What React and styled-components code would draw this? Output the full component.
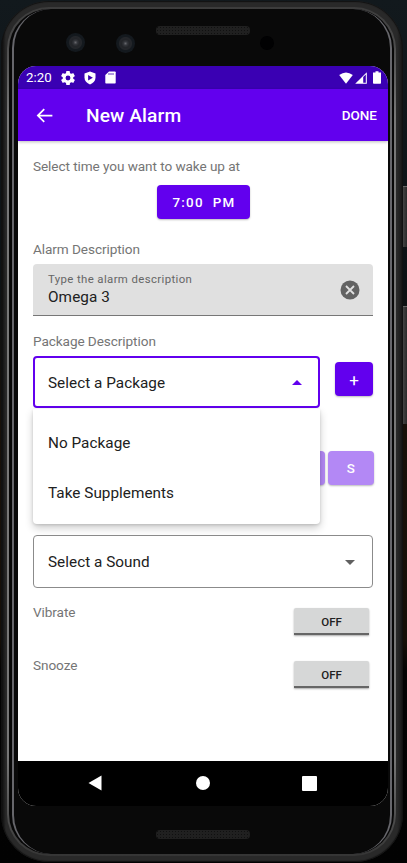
import React from "react";
import styled, { createGlobalStyle } from "styled-components";

const Global = createGlobalStyle`
  *{box-sizing:border-box}
  html,body{margin:0;padding:0;background:#05070a}
  body{width:407px;height:863px;overflow:hidden;font-family:Roboto,"Liberation Sans",sans-serif}
  button{font-family:inherit;border:0;padding:0;margin:0}
`;

const Backdrop = styled.main`
  position:relative;width:407px;height:863px;padding:1px 4px 1px 1px;overflow:hidden;
  background:linear-gradient(180deg,#12191d 0,#0c1114 280px,#171009 430px,#150f08 640px,#030303 670px,#020202 100%);
`;
const SideKey = styled.div`
  position:absolute;right:0;top:${p => p.$top}px;width:4px;height:${p => p.$height}px;
  background:linear-gradient(90deg,#444,#292929);border-top:1px solid #666;
`;
const Shell = styled.div`
  position:relative;height:861px;width:402px;border-radius:48px;padding:6px 7px 6px 6px;
  background:linear-gradient(90deg,#080808,#292929 5px,#292929 396px,#151515);
  box-shadow:inset 0 0 1px 1px #111;
`;
const Rim = styled.div`
  height:100%;border-radius:42px;padding:2px;
  background:linear-gradient(180deg,#3c3c3c 0,#484848 30px,#777 110px,#777 750px,#484848 820px,#353535 100%);
`;
const Channel = styled.div`
  height:100%;border-radius:40px;background:#070707;padding:0 2px 0 3px;
`;
const InnerRim = styled.div`
  height:100%;border-radius:39px;border:solid;border-width:0 2px;border-color:#66666b;
  background:#090909;padding:0 2px 0 4px;display:flex;flex-direction:column;
`;
const Forehead = styled.div`
  height:57px;flex:none;display:flex;justify-content:center;position:relative;
`;
const Grille = styled.div`
  width:94px;height:9px;margin-top:${p => p.$top}px;border-radius:4px;
  background-color:#202020;background-image:radial-gradient(#101010 .7px,transparent .9px);background-size:3px 3px;
`;
const Lens = styled.div`
  position:absolute;left:${p => p.$left}px;top:${p => p.$top}px;
  width:${p => p.$size}px;height:${p => p.$size}px;border-radius:50%;
  background:${p => p.$plain ? "#010102" : "radial-gradient(circle,#65666b 0,#33353a 2px,#222428 4px,#24262a 6px,#14191e 7px,#12181d 100%)"};
`;
const Screen = styled.section`
  width:370px;height:740px;flex:none;background:#fff;border-radius:18px;overflow:hidden;
  display:flex;flex-direction:column;
`;
const StatusBar = styled.header`
  height:23px;flex:none;background:#3a00b3;color:#fff;display:flex;align-items:center;
  padding:0 7px 0 8px;font-size:13.3px;
  svg{flex:none}
`;
const Clock = styled.span`width:35px;line-height:23px;`;
const StatusIcons = styled.div`display:flex;align-items:center;gap:9px;`;
const SystemIcons = styled.div`display:flex;align-items:center;gap:2px;margin-left:auto;`;
const BatterySlot = styled.span`display:flex;margin-left:4px;`;
const AppBar = styled.header`
  height:52px;flex:none;background:#6200ee;color:#fff;display:flex;align-items:center;
  padding:0 11px 0 16px;box-shadow:0 1px 3px #0004;z-index:1;
`;
const Title = styled.h1`margin:0 0 0 31px;padding-top:2px;font-size:19.2px;font-weight:500;line-height:24px;letter-spacing:.1px;`;
const Done = styled.button`margin-left:auto;background:none;color:#fff;font-size:13.5px;font-weight:500;letter-spacing:0;`;
const Form = styled.div`height:620px;padding:16px 15px 0;display:flex;flex-direction:column;`;
const Label = styled.label`
  display:block;height:18px;line-height:18px;color:#757575;font-size:13.6px;letter-spacing:-.08px;
`;
const AlarmLabel = styled(Label)`margin-top:21px;`;
const PackageLabel = styled(Label)`margin-top:16px;`;
const Filled = styled.button`
  height:34px;width:${p => p.$width}px;border-radius:4px;color:#fff;background:${p => p.$faded ? "#b388f5" : "#6200ee"};
  font-size:13.4px;font-weight:500;letter-spacing:1.2px;white-space:pre;padding:1px 0 0 1px;
  box-shadow:0 1px 2px #0004;display:flex;align-items:center;justify-content:center;flex:none;
`;
const TimeButton = styled(Filled)`margin:10px 0 0 124px;`;
const TextField = styled.div`
  height:52px;margin-top:6px;background:#e0e0e0;border-radius:4px 4px 0 0;border-bottom:1px solid #777;
  padding:9px 13px 0 15px;display:flex;justify-content:space-between;
`;
const Hint = styled.div`font-size:11.4px;line-height:13px;letter-spacing:.38px;color:#666;`;
const Value = styled.div`font-size:15.3px;line-height:20px;letter-spacing:.1px;color:#212121;margin-top:1px;`;
const ClearIcon = styled.svg`width:20px;height:20px;margin-top:7px;`;
const Row = styled.div`display:flex;justify-content:space-between;`;
const PackageRow = styled(Row)`margin-top:6px;height:52px;align-items:flex-start;`;
const SelectWrap = styled.div`position:relative;width:287px;`;
const Select = styled.div`
  height:52px;border-radius:4px;border:${p => p.$active ? "2px solid #6200ee" : "1px solid #8b8b8b"};
  padding:${p => p.$active ? "1px 16px 0 13px" : "1px 17px 0 14px"};display:flex;align-items:center;justify-content:space-between;
  color:#212121;font-size:15.3px;letter-spacing:.03px;
`;
const Menu = styled.div`
  position:absolute;left:0;top:53px;width:287px;height:115px;background:#fff;border-radius:0 0 4px 4px;
  padding:8px 0 0;box-shadow:0 4px 8px #0003,0 1px 3px #0002;z-index:2;
`;
const MenuItem = styled.div`height:50px;line-height:52px;padding-left:15px;color:#212121;font-size:15.3px;letter-spacing:.03px;`;
const AddButton = styled(Filled)`margin-top:6px;padding:2px 0 0;`;
const PlusGlyph = styled.span`font-size:17px;font-weight:400;letter-spacing:0;`;
const Days = styled.div`display:flex;gap:3px;justify-content:flex-end;margin:43px -1px 0 0;`;
const SoundSelect = styled(Select)`margin-top:50px;height:53px;`;
const Options = styled.div`margin-top:15px;`;
const OptionRow = styled(Row)`height:53px;`;
const Toggle = styled.button`
  width:75px;height:27px;margin:5px 4px 0 0;border-radius:2px 2px 0 0;background:#d6d7d7;
  border-bottom:2px solid #666;color:#212121;font-size:11.5px;font-weight:500;
  box-shadow:0 1px 2px #0005;padding-top:2px;
`;
const NavBar = styled.nav`
  height:45px;flex:none;background:#000;display:flex;align-items:center;justify-content:space-between;
  padding:0 71px 1px 70px;
`;

const Gear = () => <svg width="14" height="14" viewBox="2 2 20 20" fill="#fff"><path d="M19.43 12.98c.04-.32.07-.64.07-.98s-.03-.66-.07-.98l2.11-1.65a.5.5 0 0 0 .12-.64l-2-3.46a.5.5 0 0 0-.61-.22l-2.49 1a7.3 7.3 0 0 0-1.69-.98l-.38-2.65A.49.49 0 0 0 14 2h-4a.49.49 0 0 0-.49.42l-.38 2.65c-.61.25-1.17.59-1.69.98l-2.49-1a.5.5 0 0 0-.61.22l-2 3.46a.5.5 0 0 0 .12.64l2.11 1.65a8 8 0 0 0 0 1.96l-2.11 1.65a.5.5 0 0 0-.12.64l2 3.46a.5.5 0 0 0 .61.22l2.49-1c.52.4 1.08.73 1.69.98l.38 2.65c.03.24.24.42.49.42h4c.25 0 .46-.18.49-.42l.38-2.65a7 7 0 0 0 1.69-.98l2.49 1a.5.5 0 0 0 .61-.22l2-3.46a.5.5 0 0 0-.12-.64zM12 15.5a3.5 3.5 0 1 1 0-7 3.5 3.5 0 0 1 0 7"/></svg>;
const Shield = () => <svg width="12" height="14" viewBox="0 0 12 14"><path d="M6 .5 11.5 2.5v4.3c0 3-2.3 5.5-5.5 6.8C2.8 12.3.5 9.8.5 6.8V2.5z" fill="#fff"/><path d="m4.1 4 4.8 2.8-4.8 2.8z" fill="#3a00b3"/></svg>;
const Card = () => <svg width="11" height="13" viewBox="0 0 11 13"><path d="M4 .5h6q.7 0 .7.7v10.6q0 .7-.7.7H1q-.7 0-.7-.7V4z" fill="#fff"/><path d="M4 2v2m2-2v2m2-2v2" stroke="#3a00b3" strokeWidth=".8"/></svg>;
const Wifi = () => <svg width="14" height="12" viewBox="0 0 14 12"><path d="M.2 3Q7-2.2 13.8 3L7 11.8z" fill="#fff"/></svg>;
const Signal = () => <svg width="12" height="12" viewBox="0 0 12 12"><path d="M11.8.2v11.6H.2z" fill="#fff"/><path d="M8.2 5 10.8 2.4v8.4H8.2z" fill="#3a00b3"/></svg>;
const Battery = () => <svg width="8" height="13" viewBox="0 0 8 13"><path d="M2.5.3h3v1.2H8V12q0 .8-.8.8H.8Q0 12.8 0 12V1.5h2.5z" fill="#fff"/></svg>;
const Back = () => <svg width="21" height="21" viewBox="0 0 24 24" fill="#fff"><path d="M21 11H6.8l5.6-5.6L11 4l-8 8 8 8 1.4-1.4L6.8 13H21z"/></svg>;
const Caret = ({ up }) => <svg width="10" height="5" viewBox="0 0 10 5"><path d={up ? "M0 5 5 0l5 5z" : "M0 0h10L5 5z"} fill={up ? "#6200ee" : "#606060"}/></svg>;

export default function App() {
  return <>
    <Global />
    <Backdrop>
      <SideKey $top={186} $height={61}/><SideKey $top={306} $height={118}/>
      <Shell><Rim><Channel><InnerRim>
        <Forehead>
          <Grille $top={17}/>
          <Lens $left={48} $top={24} $size={19}/><Lens $left={98} $top={25} $size={19}/>
          <Lens $left={242} $top={27} $size={14} $plain/>
        </Forehead>
        <Screen>
          <StatusBar>
            <Clock>2:20</Clock>
            <StatusIcons><Gear/><Shield/><Card/></StatusIcons>
            <SystemIcons><Wifi/><Signal/><BatterySlot><Battery/></BatterySlot></SystemIcons>
          </StatusBar>
          <AppBar><Back/><Title>New Alarm</Title><Done>DONE</Done></AppBar>
          <Form>
            <Label>Select time you want to wake up at</Label>
            <TimeButton $width={93}>{"7:00  PM"}</TimeButton>
            <AlarmLabel>Alarm Description</AlarmLabel>
            <TextField>
              <div><Hint>Type the alarm description</Hint><Value>Omega 3</Value></div>
              <ClearIcon viewBox="0 0 20 20"><circle cx="10" cy="10" r="9.5" fill="#626262"/><path d="m6 6 8 8m0-8-8 8" stroke="#e0e0e0" strokeWidth="1.8"/></ClearIcon>
            </TextField>
            <PackageLabel>Package Description</PackageLabel>
            <PackageRow>
              <SelectWrap>
                <Select $active>Select a Package<Caret up/></Select>
                <Menu><MenuItem>No Package</MenuItem><MenuItem>Take Supplements</MenuItem></Menu>
              </SelectWrap>
              <AddButton $width={38}><PlusGlyph>+</PlusGlyph></AddButton>
            </PackageRow>
            <Days><Filled $width={46} $faded>F</Filled><Filled $width={46} $faded>S</Filled></Days>
            <SoundSelect>Select a Sound<Caret/></SoundSelect>
            <Options>
              <OptionRow><Label>Vibrate</Label><Toggle>OFF</Toggle></OptionRow>
              <OptionRow><Label>Snooze</Label><Toggle>OFF</Toggle></OptionRow>
            </Options>
          </Form>
          <NavBar>
            <svg width="14" height="16" viewBox="0 0 14 16"><path d="M13.5.5v15L.5 8z" fill="#fff"/></svg>
            <svg width="16" height="14" viewBox="0 0 16 14"><circle cx="9" cy="7" r="7" fill="#fff"/></svg>
            <svg width="15" height="15" viewBox="0 0 15 15"><rect width="15" height="15" rx="1" fill="#fff"/></svg>
          </NavBar>
        </Screen>
        <Forehead><Grille $top={24}/></Forehead>
      </InnerRim></Channel></Rim></Shell>
    </Backdrop>
  </>;
}
